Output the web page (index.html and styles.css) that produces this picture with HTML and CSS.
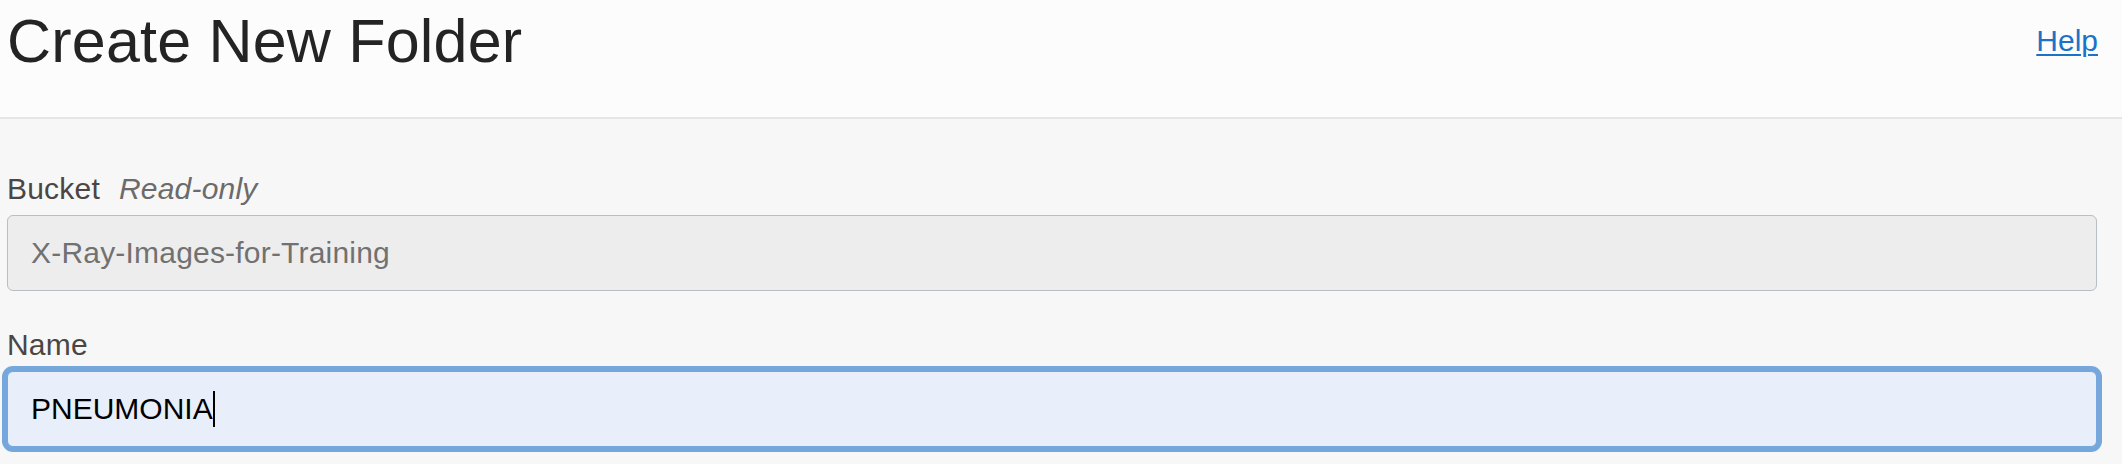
FILE: index.html
```html
<!DOCTYPE html>
<html lang="en">
<head>
<meta charset="utf-8">
<title>Create New Folder</title>
<link rel="stylesheet" href="styles.css">
</head>
<body>
<header class="header">
  <h1 class="title">Create New Folder</h1>
  <a class="help" href="#">Help</a>
</header>
<main class="form">
  <div class="field field-bucket">
    <div class="label">Bucket<span class="hint">Read-only</span></div>
    <div class="input input-readonly">X-Ray-Images-for-Training</div>
  </div>
  <div class="field field-name">
    <div class="label">Name</div>
    <div class="input input-focused">PNEUMONIA<span class="caret"></span></div>
  </div>
</main>
</body>
</html>
```

FILE: styles.css
```css
html, body {
  margin: 0;
  padding: 0;
}
body {
  background: #f7f7f7;
  font-family: "Liberation Sans", Arial, sans-serif;
  width: 2122px;
  height: 464px;
  overflow: hidden;
}
.header {
  box-sizing: border-box;
  height: 119px;
  background: #fcfcfc;
  border-bottom: 2px solid #e6e6e6;
  display: flex;
  justify-content: space-between;
  align-items: flex-start;
  padding: 0 24px 0 7px;
}
.title {
  margin: 11px 0 0 0;
  font-size: 61px;
  line-height: 61px;
  font-weight: normal;
  color: #242424;
  letter-spacing: 0.2px;
}
.help {
  margin-top: 26px;
  font-size: 30px;
  line-height: 30px;
  color: #1b72c7;
  text-decoration: underline;
  text-decoration-thickness: 2px;
  text-underline-offset: 3px;
}
.form {
  padding: 55px 25px 0 7px;
}
.field-name {
  margin-top: 39px;
}
.label {
  font-size: 30px;
  line-height: 29px;
  color: #4a4643;
  margin-bottom: 12px;
  white-space: nowrap;
  letter-spacing: 0.2px;
}
.hint {
  margin-left: 19px;
  font-style: italic;
  color: #6b6b6b;
}
.input {
  box-sizing: border-box;
  height: 76px;
  border: 1px solid #b9bdc4;
  border-radius: 6px;
  padding: 0 0 0 23px;
  font-size: 30px;
  line-height: 74px;
  white-space: nowrap;
}
.input-readonly {
  background: #ededed;
  color: #717171;
  letter-spacing: 0.2px;
}
.input-focused {
  background: #e8effb;
  border-color: #75a6dc;
  box-shadow: 0 0 0 5px #75a6dc;
  color: #000;
}
.caret {
  display: inline-block;
  width: 2px;
  height: 36px;
  background: #000;
  vertical-align: -8px;
}
```
